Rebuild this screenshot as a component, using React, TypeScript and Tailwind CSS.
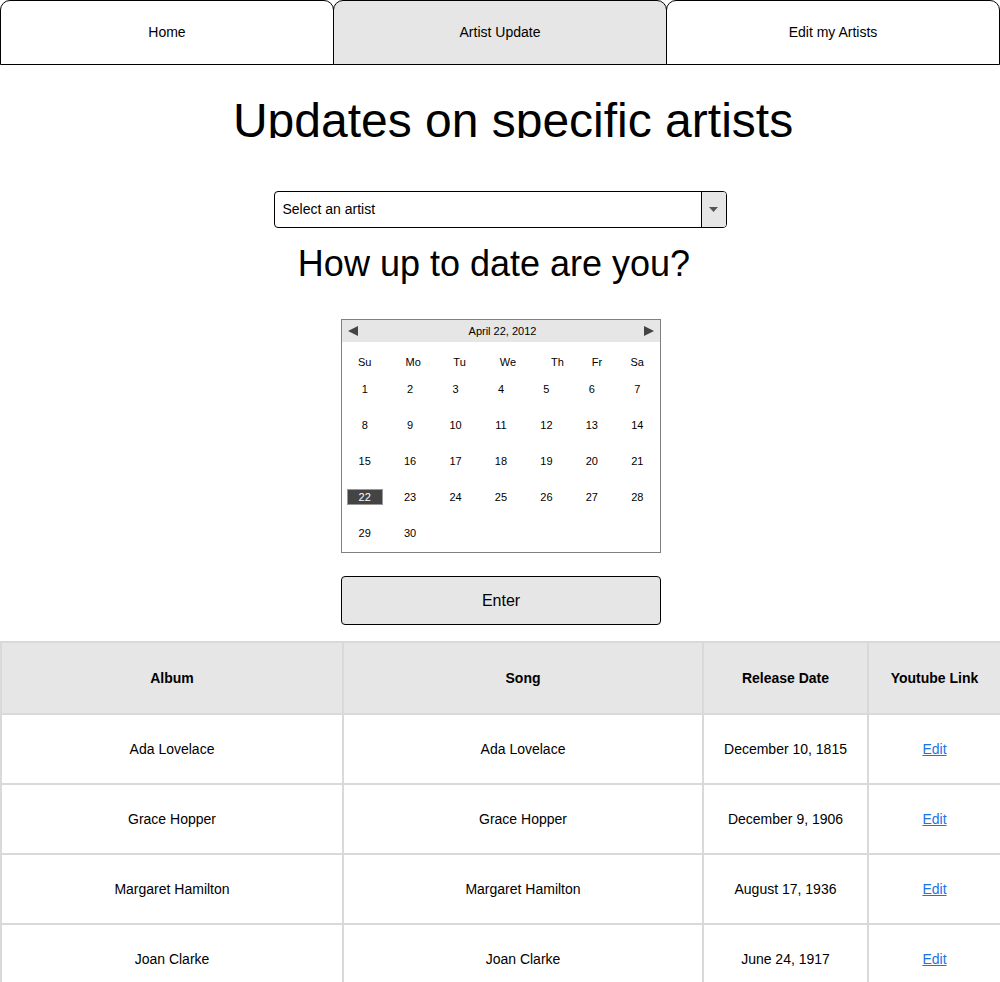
import React from "react";

const TABS = [
  { label: "Home", active: false },
  { label: "Artist Update", active: true },
  { label: "Edit my Artists", active: false },
];

const DAY_NAMES = [
  { label: "Su", pad: "" },
  { label: "Mo", pad: "pl-[6px]" },
  { label: "Tu", pad: "pl-[8px]" },
  { label: "We", pad: "pl-[14px]" },
  { label: "Th", pad: "pl-[22px]" },
  { label: "Fr", pad: "pl-[10px]" },
  { label: "Sa", pad: "" },
];

const ROWS = [
  { album: "Ada Lovelace", song: "Ada Lovelace", date: "December 10, 1815" },
  { album: "Grace Hopper", song: "Grace Hopper", date: "December 9, 1906" },
  { album: "Margaret Hamilton", song: "Margaret Hamilton", date: "August 17, 1936" },
  { album: "Joan Clarke", song: "Joan Clarke", date: "June 24, 1917" },
];

const Calendar = () => {
  const days = Array.from({ length: 30 }, (_, i) => i + 1);

  return (
    <div className="w-[320px] border border-[#808080] bg-white">
      {/* header */}
      <div className="flex h-[22px] items-center justify-between bg-[#e6e6e6] px-[5px] text-[11px] text-black">
        <svg width="12" height="12" viewBox="0 0 12 12">
          <path d="M1 6 L11 1 L11 11 Z" fill="#444" />
        </svg>
        <span className="pl-[3px]">April 22, 2012</span>
        <svg width="12" height="12" viewBox="0 0 12 12">
          <path d="M11 6 L1 1 L1 11 Z" fill="#444" />
        </svg>
      </div>

      <div className="pt-[11px] pb-px">
        <div className="grid h-[18px] grid-cols-7 items-center text-[11px]">
          {DAY_NAMES.map((d) => (
            <div key={d.label} className={`text-center ${d.pad}`}>
              {d.label}
            </div>
          ))}
        </div>
        <div className="grid grid-cols-7 auto-rows-[36px] items-center text-[11px]">
          {days.map((day) => (
            <div key={day} className="flex justify-center">
              {day === 22 ? (
                <span className="flex h-[16px] w-[36px] items-center justify-center border border-[#999] bg-[#444] text-white">
                  {day}
                </span>
              ) : (
                <span>{day}</span>
              )}
            </div>
          ))}
        </div>
      </div>
    </div>
  );
};

export default function App() {
  return (
    <div className="min-h-[982px] bg-white text-black font-['Liberation_Sans',Arial,sans-serif]">
      {/* Tabs */}
      <div className="flex h-[65px]">
        {TABS.map((tab, idx) => (
          <div
            key={tab.label}
            className={`flex flex-1 items-center justify-center rounded-t-[10px] border border-black text-[14px] ${
              idx > 0 ? "-ml-px" : ""
            } ${tab.active ? "bg-[#e6e6e6]" : "bg-white"}`}
          >
            {tab.label}
          </div>
        ))}
      </div>

      <div className="flex flex-col items-center">
        <div className="mt-[32px] h-[41px] overflow-hidden pl-[26px]">
          <h1 className="text-[48px] leading-none">Updates on specific artists</h1>
        </div>

        {/* Artist select */}
        <div className="mt-[53px] flex h-[37px] w-[453px] overflow-hidden rounded-[4px] border border-black">
          <div className="flex flex-1 items-center pl-[8px] text-[14px]">Select an artist</div>
          <div className="flex w-[25px] items-center justify-center border-l border-black bg-[#e6e6e6]">
            <svg width="9" height="5" viewBox="0 0 9 5">
              <path d="M0 0 L9 0 L4.5 5 Z" fill="#555" />
            </svg>
          </div>
        </div>

        <h2 className="mt-[18px] pr-[12px] text-[36px] leading-none">How up to date are you?</h2>

        <div className="mt-[37px] ml-[2px]">
          <Calendar />
        </div>

        <button className="ml-[2px] mt-[23px] h-[49px] w-[320px] rounded-[4px] border border-black bg-[#e6e6e6] text-[16px]">
          Enter
        </button>
      </div>

      {/* Results table */}
      <table className="mt-[16px] w-full table-fixed border-collapse text-[14px]">
        <colgroup>
          <col className="w-[342px]" />
          <col className="w-[360px]" />
          <col className="w-[165px]" />
          <col className="w-[133px]" />
        </colgroup>
        <thead>
          <tr className="h-[72px] bg-[#e6e6e6]">
            {["Album", "Song", "Release Date", "Youtube Link"].map((h) => (
              <th key={h} className="border-2 border-[#d9d9d9] text-center font-bold">
                {h}
              </th>
            ))}
          </tr>
        </thead>
        <tbody>
          {ROWS.map((row) => (
            <tr key={row.album} className="h-[70px]">
              <td className="border-2 border-[#d9d9d9] text-center">{row.album}</td>
              <td className="border-2 border-[#d9d9d9] text-center">{row.song}</td>
              <td className="border-2 border-[#d9d9d9] text-center">{row.date}</td>
              <td className="border-2 border-[#d9d9d9] text-center">
                <a href="#" className="text-[#1a73e8] underline">
                  Edit
                </a>
              </td>
            </tr>
          ))}
        </tbody>
      </table>
    </div>
  );
}
